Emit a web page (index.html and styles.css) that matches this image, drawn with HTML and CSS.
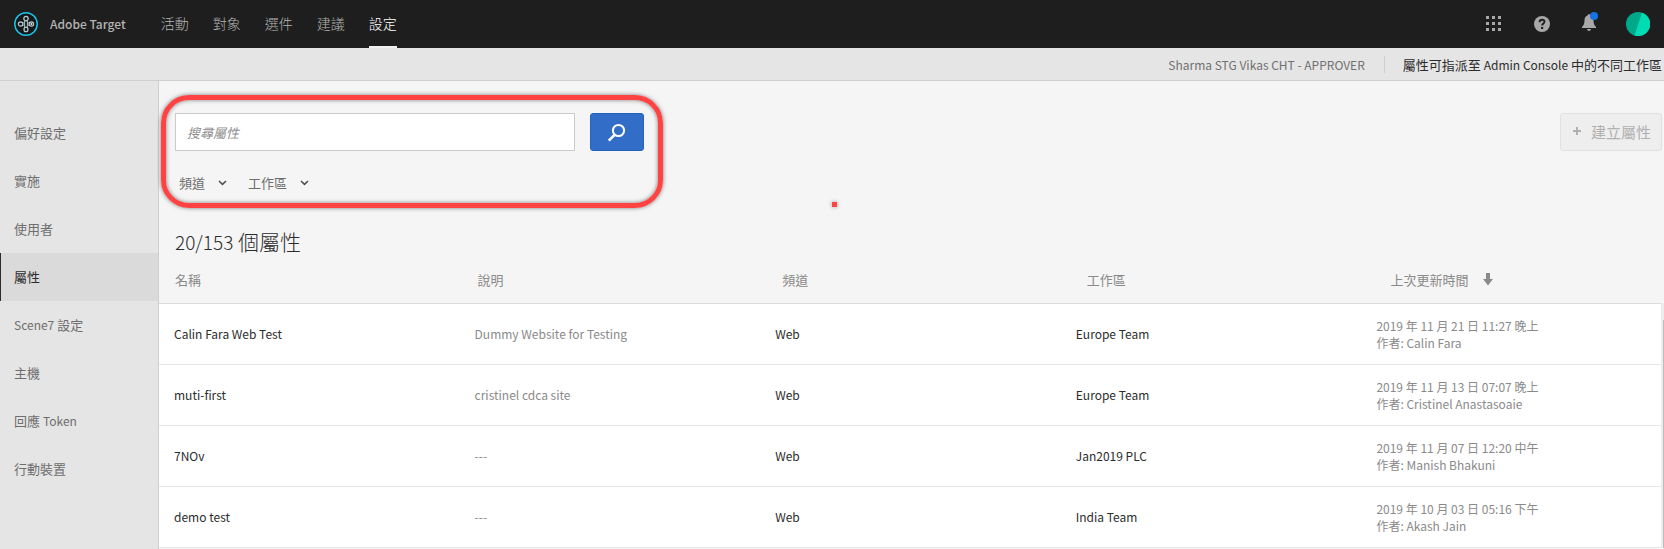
FILE: index.html
```html
<!DOCTYPE html>
<html lang="zh-Hant">
<head>
<meta charset="utf-8">
<title>Adobe Target</title>
<link rel="stylesheet" href="styles.css">
</head>
<body>
<header class="topbar">
  <svg class="logo" viewBox="0 0 24 24" aria-hidden="true">
    <circle cx="12" cy="12" r="11.2" fill="#12181b" stroke="#1cc4e4" stroke-width="1.5"/>
    <g fill="none" stroke="#bccad0" stroke-width="1.2">
      <circle cx="12" cy="6.6" r="2.2"/>
      <circle cx="6.6" cy="12" r="2.2"/>
      <circle cx="17.4" cy="12" r="2.2"/>
      <ellipse cx="12" cy="17.4" rx="2" ry="2.300"/>
      <path d="M10.600 9v6M13.400 9v6" stroke-width=".9"/>
      <path d="M8.500 10.500l2 .6M8.500 13.500l2-.6M15.500 10.500l-2 .6M15.500 13.500l-2-.6" stroke-width=".8"/>
    </g>
    <circle cx="17.400" cy="12" r="1" fill="#dfe8ec"/>
  </svg>
  <span class="brand">Adobe Target</span>
  <nav class="mainnav">
    <a href="#">活動</a>
    <a href="#">對象</a>
    <a href="#">選件</a>
    <a href="#">建議</a>
    <a href="#" class="current">設定</a>
  </nav>
  <div class="tools">
    <button class="tool wide" aria-label="應用程式">
      <svg width="16" height="16" viewBox="0 0 16 16" fill="#a8a8a8"><path d="M0 0h3v3H0zM6 0h3v3H6zM12 0h3v3h-3zM0 6h3v3H0zM6 6h3v3H6zM12 6h3v3h-3zM0 12h3v3H0zM6 12h3v3H6zM12 12h3v3h-3z"/></svg>
    </button>
    <button class="tool wide" aria-label="說明">
      <svg width="16" height="16" viewBox="0 0 16 16"><circle cx="8" cy="8" r="8" fill="#a8a8a8"/><path d="M5.600 6.200C5.600 4.500 6.700 3.700 8.100 3.700c1.400 0 2.400.8 2.400 2 0 1.900-2.400 1.800-2.400 3.900" fill="none" stroke="#1e1e1e" stroke-width="1.900"/><rect x="7" y="10.900" width="2.200" height="2.100" fill="#1e1e1e"/></svg>
    </button>
    <button class="tool" aria-label="通知">
      <svg width="18" height="24" viewBox="0 0 18 24"><path d="M5.600 3.600C5.600 2.800 6.200 2.300 7 2.300s1.400.5 1.400 1.300c2.200.7 3.100 2.500 3.100 4.700 0 3.500.8 5.200 2.500 6.500v1.200H0v-1.200C1.700 13.500 2.500 11.800 2.500 8.300c0-2.200.9-4 3.100-4.700zM5 17h4c-.2 1.200-1 1.900-2 1.900S5.200 18.200 5 17z" fill="#a8a8a8"/><circle cx="12" cy="4" r="4" fill="#1473e6"/></svg>
    </button>
    <button class="tool" aria-label="帳戶">
      <svg width="24" height="24" viewBox="0 0 24 24"><circle cx="12" cy="12" r="12" fill="#00a88a"/><path d="M16 .7A12 12 0 0 1 8.500 23.500z" fill="#00dcb4"/></svg>
    </button>
  </div>
</header>
<div class="infobar">
  <span class="tenant">Sharma STG Vikas CHT - APPROVER</span>
  <span class="notice">屬性可指派至 <span class="latin">Admin Console</span> 中的不同工作區</span>
</div>
<div class="body">
  <nav class="sidebar">
    <a href="#"><span>偏好設定</span></a>
    <a href="#"><span>實施</span></a>
    <a href="#"><span>使用者</span></a>
    <a href="#" class="current"><span>屬性</span></a>
    <a href="#"><span><span class="latin">Scene7</span> 設定</span></a>
    <a href="#"><span>主機</span></a>
    <a href="#"><span>回應 <span class="latin">Token</span></span></a>
    <a href="#"><span>行動裝置</span></a>
  </nav>
  <main class="content">
    <div class="controls">
      <form class="finder">
        <div class="searchrow">
          <input class="search" type="text" placeholder="搜尋屬性" aria-label="搜尋屬性">
          <button class="go" type="button" aria-label="搜尋">
            <svg width="20" height="20" viewBox="0 0 20 20" fill="none" stroke="#fff"><circle cx="11.500" cy="7.500" r="5.600" stroke-width="2"/><path d="M7.800 11.600 1.800 17.600" stroke-width="2.600"/></svg>
          </button>
        </div>
        <div class="filters">
          <button class="filter" type="button">頻道 <svg width="9" height="6" viewBox="0 0 9 6"><path d="M1 1l3.500 3.300L8 1" fill="none" stroke="#505050" stroke-width="1.600"/></svg></button>
          <button class="filter" type="button">工作區 <svg width="9" height="6" viewBox="0 0 9 6"><path d="M1 1l3.500 3.300L8 1" fill="none" stroke="#505050" stroke-width="1.600"/></svg></button>
        </div>
      </form>
      <button class="create" type="button" disabled><svg width="8" height="8" viewBox="0 0 8 8"><path d="M3 0h2v3h3v2H5v3H3V5H0V3h3z" fill="#b0b0b0"/></svg>建立屬性</button>
      <span class="callout"></span>
      <span class="mark"></span>
    </div>
    <h1 class="count"><span class="figures">20/153</span> 個屬性</h1>
    <div class="list">
      <table class="props">
        <thead>
          <tr><th>名稱</th><th>說明</th><th>頻道</th><th>工作區</th><th><span class="sorted">上次更新時間 <svg width="10" height="13" viewBox="0 0 10 13"><path d="M3 0h4v6h3L5 12.500 0 6h3z" fill="#8a8a8a"/></svg></span></th></tr>
        </thead>
        <tbody>
          <tr><td>Calin Fara Web Test</td><td class="dim">Dummy Website for Testing</td><td>Web</td><td>Europe Team</td><td class="dim">2019 年 11 月 21 日 11:27 晚上<br>作者: Calin Fara</td></tr>
          <tr><td>muti-first</td><td class="dim">cristinel cdca site</td><td>Web</td><td>Europe Team</td><td class="dim">2019 年 11 月 13 日 07:07 晚上<br>作者: Cristinel Anastasoaie</td></tr>
          <tr><td>7NOv</td><td class="dim">---</td><td>Web</td><td>Jan2019 PLC</td><td class="dim">2019 年 11 月 07 日 12:20 中午<br>作者: Manish Bhakuni</td></tr>
          <tr><td>demo test</td><td class="dim">---</td><td>Web</td><td>India Team</td><td class="dim">2019 年 10 月 03 日 05:16 下午<br>作者: Akash Jain</td></tr>
        </tbody>
      </table>
      <span class="scroll"></span>
    </div>
  </main>
</div>
</body>
</html>
```
FILE: styles.css
```css
* { box-sizing: border-box; }
body {
  margin: 0;
  min-height: 100vh;
  display: flex;
  flex-direction: column;
  background: #f5f5f5;
  color: #2c2c2c;
  font: 13px/17px "Noto Sans CJK TC", sans-serif;
}
a { color: inherit; text-decoration: none; }
button, input { font: inherit; color: inherit; }
svg { display: block; flex: none; }
.latin { font-size: 12px; }

.topbar {
  height: 48px;
  display: flex;
  align-items: center;
  padding: 0 14px;
  background: #1e1e1e;
  color: #b4b4b4;
}
.logo { width: 24px; height: 24px; }
.brand { margin-left: 12px; padding-bottom: 2px; font-size: 12px; font-weight: 500; }
.mainnav { display: flex; gap: 24px; margin-left: 35px; align-self: stretch; }
.mainnav a { display: flex; align-items: center; font-size: 14px; font-weight: 300; border-bottom: 2px solid transparent; }
.mainnav .current { color: #fff; border-bottom-color: #f0f0f0; }
.tools { display: flex; align-items: center; gap: 26px; margin-left: auto; }
.tool { padding: 0; border: 0; background: none; }
.wide { width: 22px; }

.infobar {
  height: 33px;
  display: flex;
  align-items: center;
  justify-content: flex-end;
  padding-right: 2px;
  background: #e5e5e5;
  border-bottom: 1px solid #cfcfcf;
  white-space: nowrap;
}
.tenant { padding-right: 19px; border-right: 1px solid #cfcfcf; color: #707070; font-size: 12px; }
.notice { padding-left: 18px; }

.body { flex: 1; display: flex; }
.sidebar {
  width: 159px;
  flex: none;
  padding-top: 28px;
  background: #e5e5e5;
  border-right: 1px solid #cfcfcf;
  color: #6e6e6e;
}
.sidebar a { display: flex; align-items: center; height: 48px; padding: 0 0 2px 13px; border-left: 1px solid transparent; }
.sidebar .current { background: #dadada; border-left-color: #2c2c2c; color: #2c2c2c; }

.content { flex: 1; min-width: 0; }
.controls { position: relative; display: flex; align-items: flex-start; justify-content: space-between; padding: 32px 2px 0 16px; }
.searchrow { display: flex; gap: 15px; }
.search { width: 400px; height: 38px; padding: 0 11px; border: 1px solid #cacaca; background: #fff; }
.search::placeholder { color: #8e8e8e; font-style: italic; opacity: 1; }
.go { width: 54px; height: 38px; display: grid; place-items: center; padding: 2px 0 0; border: 1px solid #2264bd; border-radius: 3px; background: #326ec8; }
.filters { display: flex; gap: 21px; padding: 23px 0 0 4px; }
.filter { display: flex; align-items: center; gap: 13px; padding: 0; border: 0; background: none; color: #6e6e6e; }
.create { display: flex; align-items: center; gap: 10px; height: 38px; padding: 0 10px 2px 12px; border: 1px solid #e1e1e1; border-radius: 3px; background: #eee; color: #b0b0b0; font-size: 15px; }
.callout {
  position: absolute;
  left: 2px;
  top: 14px;
  width: 502px;
  height: 113px;
  border: 5px solid #ff4343;
  border-radius: 28px;
  box-shadow: 0 0 4px rgba(0,0,0,.5), inset 0 0 4px rgba(0,0,0,.5);
  pointer-events: none;
}
.mark { position: absolute; left: 673px; top: 121px; width: 5px; height: 5px; background: #ff4343; box-shadow: 0 0 4px rgba(0,0,0,.4); }
.count { margin: 35px 0 0 16px; font-size: 21px; line-height: 30px; font-weight: 300; }
.figures { font-size: 19px; }

.list { position: relative; padding-right: 2px; }
.props { width: 100%; table-layout: fixed; border-collapse: collapse; }
.props th { height: 46px; padding: 0 0 0 16px; text-align: left; font-weight: 400; color: #8a8a8a; border-bottom: 1px solid #dcdcdc; }
.props th:nth-child(2) { padding-left: 18px; }
.props th:nth-child(3) { padding-left: 22px; }
.props th:nth-child(4) { padding-left: 26px; }
.props th:nth-child(5) { padding-left: 29px; }
.sorted { display: flex; align-items: center; gap: 15px; }
.props td { height: 61px; padding: 0 0 0 15px; background: #fff; border-bottom: 1px solid #e6e6e6; font-size: 12px; }
.props .dim { color: #8a8a8a; }
.scroll { position: absolute; top: 46px; right: 0; bottom: 0; width: 3px; border-top: 17px solid #ececec; border-left: 2px solid #ececec; background: #bdbdbd; }
```
